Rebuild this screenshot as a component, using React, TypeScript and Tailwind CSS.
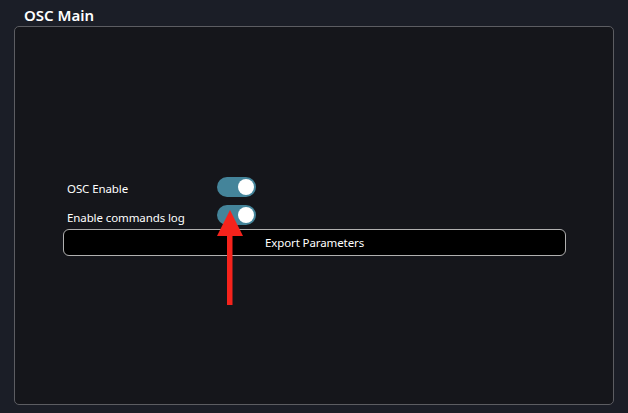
import { useState } from "react";

function Toggle({ on, onChange }: { on: boolean; onChange: () => void }) {
  return (
    <button
      onClick={onChange}
      className={`relative h-[20px] w-[39px] rounded-full ${on ? "bg-[#44849a]" : "bg-[#555]"}`}
    >
      <span
        className={`absolute top-[2px] h-[16px] w-[16px] rounded-full bg-white ${on ? "left-[21px]" : "left-[2px]"}`}
      />
    </button>
  );
}

export default function App() {
  const [osc, setOsc] = useState(true);
  const [log, setLog] = useState(true);

  return (
    <div className="relative h-[413px] w-[628px] overflow-hidden bg-[#1b1e27] font-['Noto_Sans',sans-serif] text-white">
      <h1 className="pl-[24px] pt-[5px] text-[15px] font-semibold leading-[20px]">OSC Main</h1>

      <div className="mx-[14px] mt-[1px] h-[379px] rounded-[5px] border border-[#5c5d62] bg-[#15161b] pt-[146px] pl-[48px] pr-[47px]">
        <div className="flex h-[28px] items-center pl-[4px]">
          <span className="w-[150px] pt-[3px] text-[11.5px] tracking-[-0.1px]">OSC Enable</span>
          <Toggle on={osc} onChange={() => setOsc(!osc)} />
        </div>
        <div className="flex h-[28px] items-center pl-[4px]">
          <span className="w-[150px] pt-[6px] text-[11.5px] tracking-[-0.1px]">Enable commands log</span>
          <Toggle on={log} onChange={() => setLog(!log)} />
        </div>
        <button className="h-[27px] w-full rounded-[6px] border border-[#b0b0b0] bg-black text-[11.5px] tracking-[-0.1px] text-white">
          Export Parameters
        </button>
      </div>

      {/* red annotation arrow */}
      <svg className="absolute left-[214px] top-[208px]" width="32" height="100" viewBox="0 0 32 100">
        <polygon points="16,2 3,28 29,28" fill="#f5231c" />
        <rect x="13" y="26" width="5.5" height="71" fill="#f5231c" />
      </svg>
    </div>
  );
}
